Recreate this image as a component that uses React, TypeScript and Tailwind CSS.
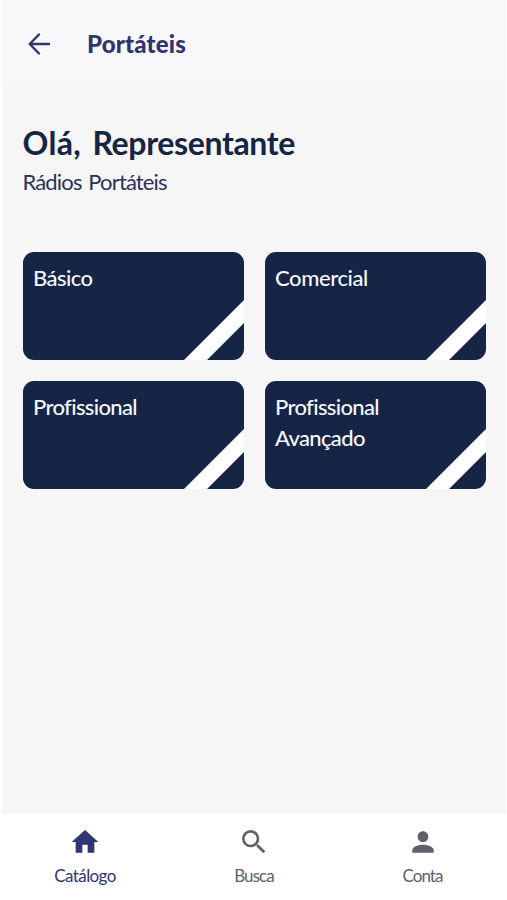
import { MdHome, MdPerson, MdSearch } from "react-icons/md";

const cards = [
  { label: "Básico", tracking: "tracking-[-0.55px]" },
  { label: "Comercial", tracking: "tracking-[-0.4px]" },
  { label: "Profissional", tracking: "tracking-[-0.65px]" },
  { label: "Profissional Avançado", tracking: "tracking-[-0.65px]" },
];

function Card({ label, tracking }: { label: string; tracking: string }) {
  return (
    <button className="relative h-[108px] overflow-hidden rounded-[11px] bg-[#162445] text-left">
      <span className={`absolute left-[10.5px] top-[10px] w-[130px] text-[22px] font-medium leading-[31px] text-[#f4f8ff] ${tracking}`}>
        {label}
      </span>
      <svg className="absolute bottom-0 right-0" width="60" height="60" viewBox="0 0 60 60" fill="white">
        <path d="M60 0L0 60h23L60 23z" />
      </svg>
    </button>
  );
}

export default function App() {
  return (
    <div className="h-[900px] bg-white pl-[2px] pr-px font-['Lato',sans-serif]">
      <div className="flex h-full flex-col bg-[#f6f6f6]">
        <header className="flex h-[86px] items-center bg-[#f8f8fb] pb-0.5 text-[#30336f]">
          <svg className="ml-[25px] mt-1" width="24" height="24" viewBox="0 0 24 24" fill="none" stroke="currentColor" strokeWidth="2.4" strokeLinecap="round" strokeLinejoin="round">
            <path d="M22 12H3M12 2.5L2.7 12l9.3 9.5" />
          </svg>
          <h1 className="ml-[36px] mt-1 text-[24px] font-black leading-8 tracking-[0.2px]">Portáteis</h1>
        </header>
        <main className="flex-1 pl-[20.5px] pr-[20.5px] pt-[37px]">
          <h2 className="text-[32px] font-bold leading-[40px] tracking-[-0.35px] text-[#162445]">
            <span className="mr-[4px] tracking-[0.3px]">Olá,</span> Representante
          </h2>
          <p className="mt-[4px] text-[22px] leading-[30px] tracking-[-0.85px] text-[#2b315b] [word-spacing:2px]">Rádios Portáteis</p>
          <div className="mt-[55px] grid grid-cols-2 gap-x-[21px] gap-y-[21px]">
            {cards.map((c) => (
              <Card key={c.label} {...c} />
            ))}
          </div>
        </main>
        <nav className="grid h-[86px] grid-cols-3 bg-white text-[17px] leading-6 text-[#605f6b]">
          <a className="flex flex-col items-center pr-[2px] pt-[12px] text-[#2f3575]">
            <MdHome size={32} />
            <span className="mt-[6px] tracking-[-0.6px]">Catálogo</span>
          </a>
          <a className="flex flex-col items-center pt-[12px]">
            <MdSearch size={32} />
            <span className="mt-[6px] tracking-[-0.9px]">Busca</span>
          </a>
          <a className="flex flex-col items-center pl-[1px] pt-[12px]">
            <MdPerson size={32} />
            <span className="mt-[6px] tracking-[-0.9px]">Conta</span>
          </a>
        </nav>
      </div>
    </div>
  );
}
